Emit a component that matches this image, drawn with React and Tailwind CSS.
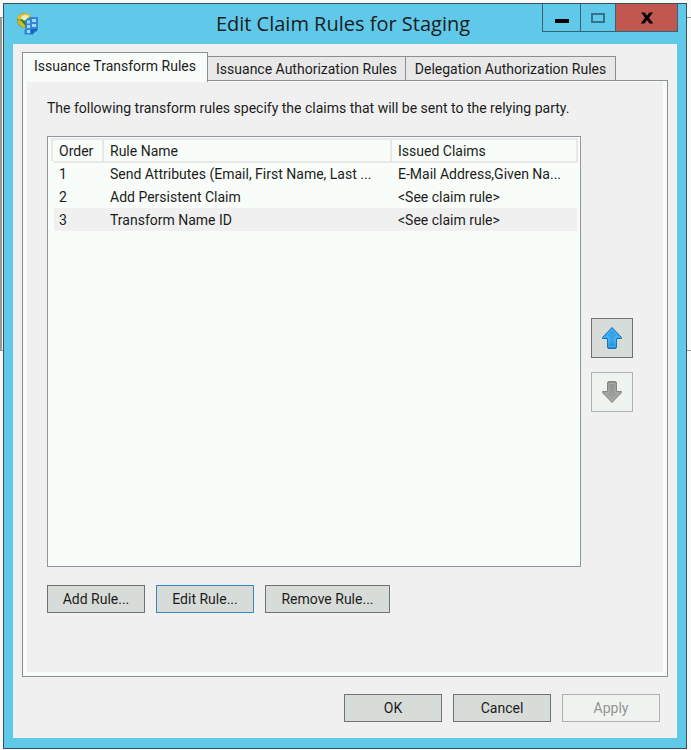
import { useState } from 'react';

const tabs = [
  { label: 'Issuance Transform Rules', width: 'w-[186px]' },
  { label: 'Issuance Authorization Rules', width: 'w-[198px]' },
  { label: 'Delegation Authorization Rules', width: 'w-[210px]' },
];

const rules = [
  { order: 1, name: 'Send Attributes (Email, First Name, Last ...', claims: 'E-Mail Address,Given Na...' },
  { order: 2, name: 'Add Persistent Claim', claims: '<See claim rule>' },
  { order: 3, name: 'Transform Name ID', claims: '<See claim rule>' },
];

const AppIcon = () => (
  <svg width="24" height="24" viewBox="0 0 24 24" aria-hidden="true">
    <circle cx="8.500" cy="8.500" r="7.500" fill="#4a9c3c" />
    <path d="M1.500 5C4 1 11-.5 15 4l-3 2.500C9 4.500 7 5 5.500 8L1.500 7z" fill="#f0b92e" />
    <path d="M5 5l4-2.500 4 1.500-3 4-4 1z" fill="#e4f0c0" />
    <path d="M2 9.500c1 4 4 6 8 6V11L6 7z" fill="#2f7a42" />
    <path d="M1.500 7.500l4 1.500 4 5-1 2C4 15 1.500 12 1.500 7.500z" fill="#d4b52c" />
    <path d="M9.500 8l4-2 1-1H22v13h-3v3h-4v1.500H8.500V17h1z" fill="#3088d6" />
    <path d="M11 8.500h3v3h-3zM16 7h4v3h-4zM11 13h3v3h-3zM16 12h4v3h-4zM11 18h3v3h-3z" fill="#9fd8fa" />
    <path d="M15 17h6v2.500h-3l-1 3h-2z" fill="#1c62bd" />
  </svg>
);

const ArrowIcon = ({ down, disabled }) => (
  <svg width="22" height="24" viewBox="0 0 22 24" className={down ? 'rotate-180' : ''} aria-hidden="true">
    <defs>
      <linearGradient id={down ? 'arrowDown' : 'arrowUp'} x1="0" y1="0" x2="0" y2="1">
        <stop offset="0" stopColor={disabled ? '#a3a5a2' : '#2d9be6'} />
        <stop offset="0.6" stopColor={disabled ? '#999b98' : '#35a8f0'} />
        <stop offset="1" stopColor={disabled ? '#8e908d' : '#1e86d2'} />
      </linearGradient>
    </defs>
    <path
      d="M11 1.500L20.500 11.500V12.500H15.500V21Q15.500 22.500 14 22.500H8Q6.500 22.500 6.500 21V12.500H1.500V11.500z"
      fill={`url(#${down ? 'arrowDown' : 'arrowUp'})`}
      stroke={disabled ? '#858783' : '#1974b8'}
      strokeLinejoin="round"
    />
    <path
      d="M11 3.500L17.500 11H14V20.500H8V11H4.500z"
      fill="none"
      stroke={disabled ? '#b2b4b0' : '#5cc3fa'}
      strokeOpacity="0.7"
    />
  </svg>
);

const PushButton = ({ children, width = 'w-[98px]', focused, disabled }) => {
  const look = disabled
    ? 'border-[#adb4b0] bg-[#eff3f0] text-[#939593]'
    : focused
      ? 'border-[#3a86c4] bg-[#d8dcd8]'
      : 'border-[#6f7270] bg-[#d8dcd8]';
  return (
    <button type="button" disabled={disabled} className={`h-7 border ${width} ${look}`}>
      {children}
    </button>
  );
};

const TitleBar = () => (
  <header className="flex h-10 items-start">
    <div className="w-[140px] pl-3 pt-2">
      <AppIcon />
    </div>
    <h1 className="flex-1 whitespace-nowrap text-center font-['Open_Sans',sans-serif] text-[20px] leading-10">
      Edit Claim Rules for Staging
    </h1>
    <div className="mr-2 flex h-7 border border-t-0 border-[#356575]">
      <button type="button" aria-label="Minimize" className="flex w-[38px] items-center justify-center border-r border-[#356575]">
        <span className="mt-1.5 h-1 w-3.5 bg-black" />
      </button>
      <button type="button" aria-label="Maximize" className="flex w-[35px] items-center justify-center border-r border-[#356575]">
        <span className="h-2.5 w-3.5 border-2 border-[#357486]" />
      </button>
      <button type="button" aria-label="Close" className="flex w-[61px] items-center justify-center bg-[#c1574f]">
        <svg width="14" height="12" viewBox="0 0 14 12" aria-hidden="true">
          <path d="M1 .5h3.700L7 3.700 9.300.5H13L9 5.800l4.300 5.700H9.500L7 8.100l-2.500 3.400H.7L5 5.800z" />
        </svg>
      </button>
    </div>
  </header>
);

const RulesTable = () => (
  <div className="flex-1 border border-[#8f969e] bg-[#f8fdf9] px-0.5 pt-px">
    <table className="w-full table-fixed border-collapse text-left">
      <colgroup>
        <col className="w-[51px]" />
        <col className="w-[288px]" />
        <col />
      </colgroup>
      <thead>
        <tr className="h-[23px]">
          <th className="border-2 border-[#e6e9e7] pl-1.5 font-normal">Order</th>
          <th className="border-2 border-[#e6e9e7] pl-1.5 font-normal">Rule Name</th>
          <th className="border-2 border-[#e6e9e7] pl-1.5 font-normal">Issued Claims</th>
        </tr>
      </thead>
      <tbody>
        {rules.map((rule) => (
          <tr key={rule.order} className={rule.order === 3 ? 'h-[23px] bg-[#f0f0f0]' : 'h-[23px]'}>
            <td className="border-l-4 border-[#f8fdf9] pl-[5px]">{rule.order}</td>
            <td className="whitespace-nowrap pl-[7px]">{rule.name}</td>
            <td className="whitespace-nowrap pl-[7px]">{rule.claims}</td>
          </tr>
        ))}
      </tbody>
    </table>
  </div>
);

const App = () => {
  const [activeTab, setActiveTab] = useState(0);

  return (
    <div className="relative flex min-h-screen bg-[#f7faf8] py-[3px] pl-[3px] pr-1 pb-px font-['Roboto',sans-serif] text-[14px] leading-5 text-[#1c1c1c]">
      {/* edge of the window behind the dialog */}
      <div className="absolute inset-x-0 top-[17px] h-[334px] border border-l-2 border-r-0 border-[#959a98]" />

      <div className="relative flex flex-1 flex-col border border-[#35525c] bg-[#60c8e8] px-[9px] pb-2.5">
        <div className="-mx-[9px]">
          <TitleBar />
        </div>

        <main className="flex flex-1 flex-col bg-[#f0f0f0] px-[9px] pb-4 pt-2">
          <div role="tablist" className="flex items-end">
            {tabs.map((tab, index) => (
              <button
                key={tab.label}
                type="button"
                role="tab"
                aria-selected={index === activeTab}
                onClick={() => setActiveTab(index)}
                className={
                  index === activeTab
                    ? `relative -mb-0.5 h-[30px] whitespace-nowrap border border-b-0 border-[#8c8f92] bg-[#f8fdf9] pb-1 ${tab.width}`
                    : `h-6 whitespace-nowrap border border-b-0 border-l-0 border-[#8c8f92] bg-[#e8e8e8] ${tab.width}`
                }
              >
                {tab.label}
              </button>
            ))}
          </div>

          <section className="flex flex-1 flex-col border border-[#8c8f92] bg-[#f8fdf9] px-1 pb-1 pt-px">
            <div className="flex flex-1 flex-col bg-[#f0f0f0] pb-[59px] pl-5 pr-[30px] pt-4">
              <p>The following transform rules specify the claims that will be sent to the relying party.</p>
              <div className="mt-[18px] flex flex-1 gap-2.5">
                <RulesTable />
                <div className="flex w-[42px] flex-col justify-center gap-3.5 pt-[26px]">
                  <button
                    type="button"
                    aria-label="Move rule up"
                    className="flex h-10 items-center justify-center border border-[#6f7270] bg-[#d8dcd8]"
                  >
                    <ArrowIcon />
                  </button>
                  <button
                    type="button"
                    aria-label="Move rule down"
                    disabled
                    className="flex h-10 items-center justify-center border border-[#adb4b0] bg-[#eff3f0]"
                  >
                    <ArrowIcon down disabled />
                  </button>
                </div>
              </div>
              <div className="mt-[18px] flex gap-[11px]">
                <PushButton>Add Rule...</PushButton>
                <PushButton focused>Edit Rule...</PushButton>
                <PushButton width="w-[125px]">Remove Rule...</PushButton>
              </div>
            </div>
          </section>

          <footer className="mt-[17px] flex justify-end gap-[11px] pr-2">
            <PushButton>OK</PushButton>
            <PushButton>Cancel</PushButton>
            <PushButton disabled>Apply</PushButton>
          </footer>
        </main>
      </div>
    </div>
  );
};

export default App;
